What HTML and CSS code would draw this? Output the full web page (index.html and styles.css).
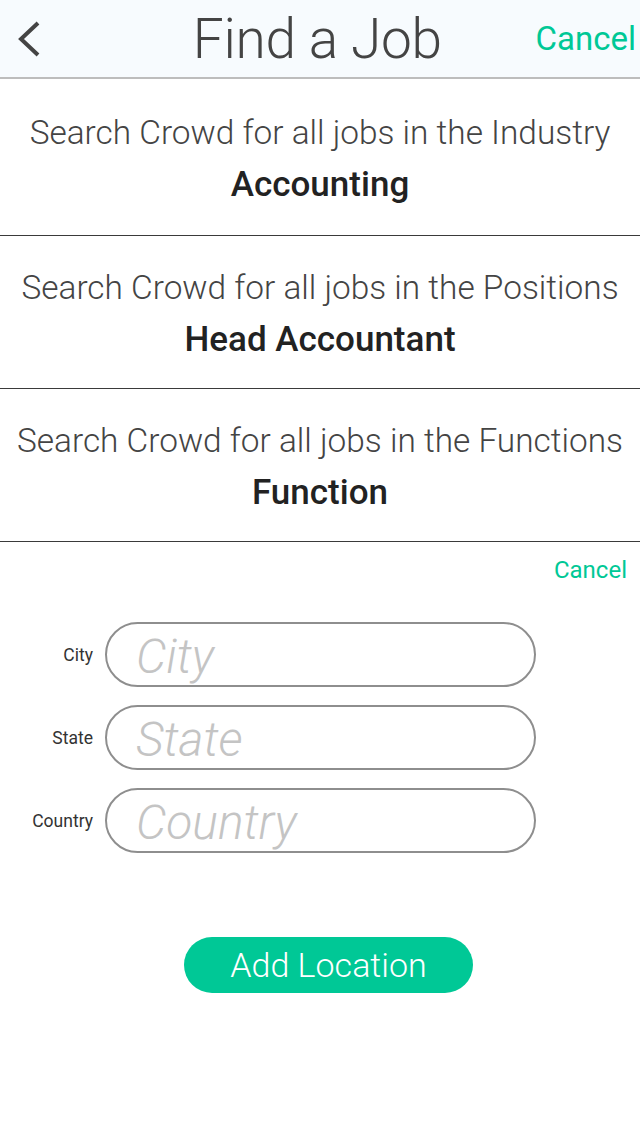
FILE: index.html
```html
<!DOCTYPE html>
<html>
<head>
<meta charset="utf-8">
<link rel="stylesheet" href="styles.css">
</head>
<body>
<div class="app">
  <header class="topbar">
    <button class="back" aria-label="Back">
      <svg width="26" height="36" viewBox="0 0 26 36"><path d="M22 2 L5 18 L22 34" fill="none" stroke="#444" stroke-width="4" stroke-linejoin="miter"/></svg>
    </button>
    <h1 class="title">Find a Job</h1>
    <a class="cancel-top">Cancel</a>
  </header>

  <section class="crit">
    <p class="crit-line">Search Crowd for all jobs in the Industry</p>
    <p class="crit-value">Accounting</p>
  </section>
  <section class="crit">
    <p class="crit-line">Search Crowd for all jobs in the Positions</p>
    <p class="crit-value">Head Accountant</p>
  </section>
  <section class="crit">
    <p class="crit-line">Search Crowd for all jobs in the Functions</p>
    <p class="crit-value">Function</p>
  </section>

  <div class="loc">
    <div class="loc-cancel-row"><a class="cancel-small">Cancel</a></div>
    <form class="fields">
      <label class="field"><span class="lbl">City</span><input class="inp" placeholder="City"></label>
      <label class="field"><span class="lbl">State</span><input class="inp" placeholder="State"></label>
      <label class="field"><span class="lbl">Country</span><input class="inp" placeholder="Country"></label>
    </form>
    <div class="btn-row"><button class="add-btn">Add Location</button></div>
  </div>
</div>
</body>
</html>
```

FILE: styles.css
```css
* { box-sizing: border-box; }
html, body { margin: 0; padding: 0; background: #fff; }
body { font-family: "Roboto", "Liberation Sans", sans-serif; color: #444; width: 640px; }

.topbar {
  height: 79px;
  background: #f7fbfe;
  border-bottom: 2px solid #bdbdbd;
  display: flex;
  align-items: center;
  position: relative;
}
.back {
  background: none; border: 0; padding: 0;
  width: 60px; height: 77px;
  display: flex; align-items: center; justify-content: center;
  margin-left: -1px;
}
.title {
  flex: 1;
  margin: 0;
  text-align: center;
  font-weight: 300;
  font-size: 55px;
  color: #444;
  letter-spacing: -0.3px;
  padding-left: 40px;
}
.cancel-top {
  font-size: 33px;
  color: #00c896;
  font-weight: 400;
  padding-right: 4px;
}

.crit {
  border-bottom: 1px solid #3a3a3a;
  height: 153px;
  display: flex;
  flex-direction: column;
  align-items: center;
  padding-top: 32px;
}
.crit:first-of-type { height: 157px; padding-top: 34px; }
.crit-line {
  margin: 0;
  font-size: 33.4px;
  font-weight: 300;
  color: #444;
  white-space: nowrap;
  line-height: 40px;
}
.crit-value {
  margin: 11px 0 0;
  font-size: 35px;
  font-weight: 500;
  color: #222;
  line-height: 42px;
}

.loc-cancel-row {
  display: flex;
  justify-content: flex-end;
  padding: 14px 13px 0 0;
  height: 80px;
}
.cancel-small {
  font-size: 24px;
  color: #00c896;
  line-height: 28px;
}
.fields {
  display: flex;
  flex-direction: column;
  gap: 18px;
}
.field {
  display: flex;
  align-items: center;
}
.lbl {
  width: 94px;
  text-align: right;
  padding-right: 1px;
  font-size: 17.5px;
  color: #333;
}
.inp {
  margin-left: 11px;
  width: 431px;
  height: 65px;
  border: 2px solid #8e8e8e;
  border-radius: 33px;
  padding: 4px 0 0 29px;
  font-family: inherit;
  font-size: 48px;
  font-style: italic;
  font-weight: 300;
  color: #444;
  background: #fff;
  outline: none;
}
.inp::placeholder { color: #c4c4c4; }
.btn-row {
  display: flex;
  justify-content: center;
  padding-top: 84px;
  padding-left: 17px;
}
.add-btn {
  width: 289px;
  height: 56px;
  border: 0;
  border-radius: 28px;
  background: #00c896;
  color: #fff;
  font-family: inherit;
  font-size: 34px;
  font-weight: 300;
  padding: 0;
}
```
